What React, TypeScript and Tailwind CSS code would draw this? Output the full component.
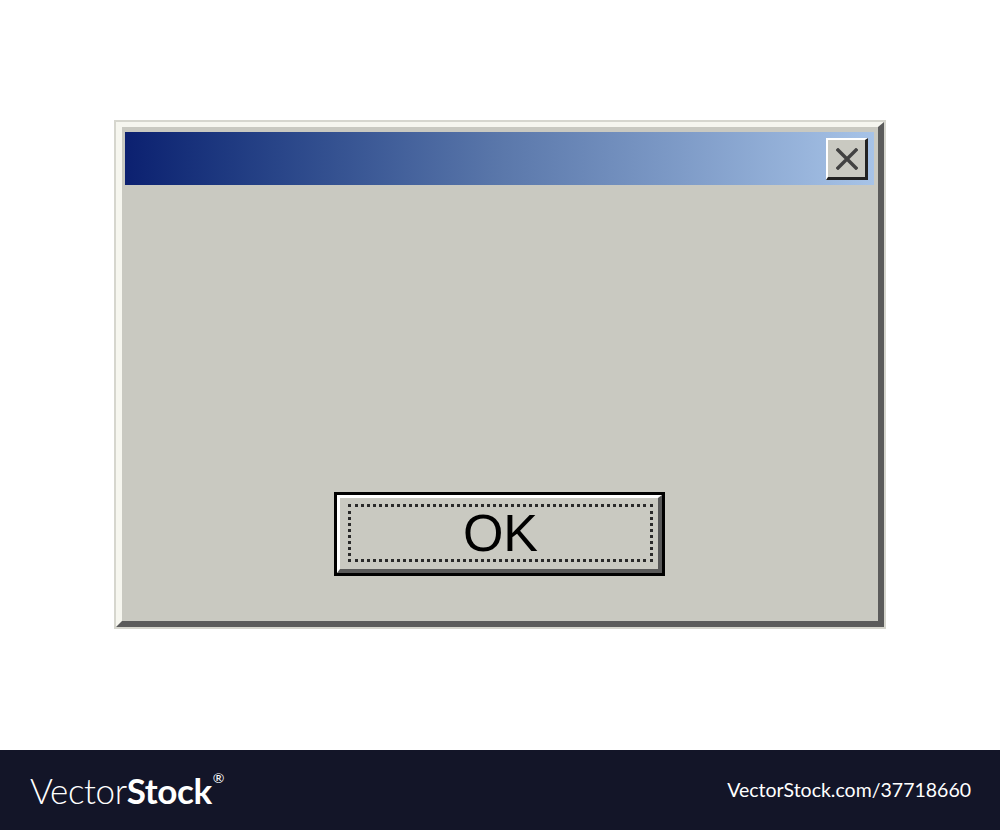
import React from 'react';

const CloseIcon: React.FC = () => (
  <svg width="22" height="22" viewBox="0 0 22 22" fill="none">
    <path d="M2 2 L20 20 M20 2 L2 20" stroke="#424242" strokeWidth="3.4" strokeLinecap="square" />
  </svg>
);

const App: React.FC = () => {
  return (
    <div className="w-[1000px] h-[830px] bg-white flex flex-col" style={{ fontFamily: '"Liberation Sans", Arial, sans-serif' }}>
      <div className="h-[750px] pt-[120px]">
        {/* dialog window */}
        <div className="mx-auto w-[772px] border-2 border-[#d6d6ce]">
          <div className="border-t-[5px] border-l-[6px] border-r-[6px] border-b-[6px] border-t-[#f6f6ef] border-l-[#f6f6ef] border-r-[#5b5b5b] border-b-[#5b5b5b] bg-[#c9c9c1] pt-[5px] pl-[3px] pr-[4px]">
            {/* title bar */}
            <div className="h-[53px] flex items-start justify-end pt-[6px] pr-[6px] bg-gradient-to-r from-[#0c2070] via-[#5a77aa] to-[#a7c3e7]">
              <button className="w-[42px] h-[42px] flex items-center justify-center bg-[#c9c9c1] border-t-2 border-l-2 border-r-[3px] border-b-[3px] border-t-white border-l-white border-r-[#222] border-b-[#222]">
                <CloseIcon />
              </button>
            </div>
            {/* body */}
            <div className="h-[436px] flex items-end justify-center pb-[45px]">
              <div className="w-[331px] h-[84px] border-[3px] border-black">
                <div className="h-full border-t-[3px] border-l-[3px] border-r-[4px] border-b-[4px] border-t-white border-l-white border-r-[#585858] border-b-[#585858] bg-[#c9c9c1] pl-[8px] pr-[5px] pt-[6px] pb-[7px]">
                  <div className="h-full border-[3px] border-dotted border-[#2a2a2a] flex items-center justify-center">
                    <span className="text-[52px] leading-none text-black">OK</span>
                  </div>
                </div>
              </div>
            </div>
          </div>
        </div>
      </div>
      {/* footer strip */}
      <div className="h-[80px] bg-[#131528] flex items-center justify-between pl-[30px] pr-[29px] text-white" style={{ fontFamily: 'Lato, "Open Sans", sans-serif' }}>
        <div className="flex items-start">
          <span className="text-[35px] leading-none font-light tracking-[-0.4px]">Vector</span>
          <span className="text-[35px] leading-none font-bold tracking-[-0.4px]">Stock</span>
          <span className="text-[14px] leading-none ml-[1px] -mt-[2px]">®</span>
        </div>
        <span className="text-[19.5px] leading-none">VectorStock.com/37718660</span>
      </div>
    </div>
  );
};

export default App;
